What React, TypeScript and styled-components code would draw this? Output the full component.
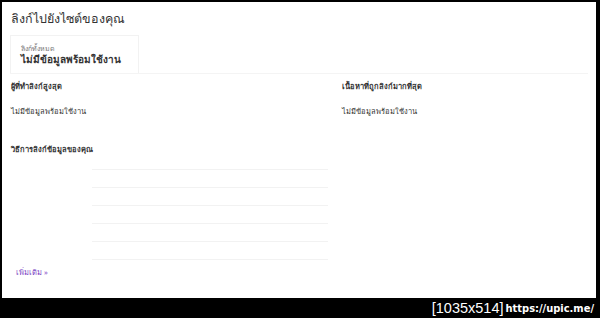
import styled, { createGlobalStyle } from 'styled-components';

const GlobalStyle = createGlobalStyle`
  html, body {
    margin: 0;
    padding: 0;
    background: #000;
    font-family: "Noto Sans", "DejaVu Sans", sans-serif;
  }
`;

const Screen = styled.div`
  width: 600px;
  height: 318px;
  background: #000;
  display: flex;
  flex-direction: column;
  padding: 2px 4px 0 2px;
  box-sizing: border-box;
`;

const Page = styled.main`
  height: 296px;
  background: #fff;
  display: flex;
  flex-direction: column;
  box-sizing: border-box;
  padding: 9px 8px 0 8px;
  color: #222;
`;

const Title = styled.h1`
  margin: 0 0 0 1px;
  font-size: 12.5px;
  font-weight: 400;
  color: #333;
  line-height: 16px;
`;

const SummaryCard = styled.div`
  margin-top: 8px;
  width: 129px;
  height: 38px;
  box-sizing: border-box;
  border: 1px solid #f2f2f2;
  border-bottom: none;
  padding: 8px 0 0 10px;
  display: flex;
  flex-direction: column;
`;

const CardLabel = styled.span`
  font-size: 7px;
  line-height: 9px;
  color: #777;
`;

const CardValue = styled.span`
  font-size: 10px;
  line-height: 13px;
  font-weight: 700;
  color: #333;
`;

const Divider = styled.hr`
  margin: 0;
  border: none;
  border-top: 1px solid #f4f4f4;
`;

const Columns = styled.div`
  display: grid;
  grid-template-columns: 331px 1fr;
  padding: 6px 0 0 1px;
`;

const Column = styled.section`
  display: flex;
  flex-direction: column;
`;

const SectionHeading = styled.h2`
  margin: 0;
  font-size: 7.5px;
  line-height: 12px;
  font-weight: 700;
  color: #333;
`;

const EmptyText = styled.p`
  margin: 13px 0 0 0;
  font-size: 7.5px;
  line-height: 12px;
  color: #333;
`;

const HowToSection = styled.section`
  padding: 26px 0 0 1px;
  display: flex;
  flex-direction: column;
`;

const Lines = styled.div`
  margin: 14px 0 0 81px;
  width: 236px;
  display: flex;
  flex-direction: column;
  gap: 17px;
`;

const Line = styled.div`
  height: 1px;
  background: #f2f2f2;
`;

const MoreLink = styled.a`
  margin: 6px 0 0 5px;
  font-size: 7.5px;
  line-height: 12px;
  color: #7b3fc4;
  text-decoration: none;
`;

const Watermark = styled.footer`
  height: 20px;
  display: flex;
  align-items: center;
  justify-content: flex-end;
  gap: 2px;
  padding-right: 2px;
  color: #fff;
  font-family: "Liberation Sans", sans-serif;
  font-size: 14.5px;
`;

const WatermarkUrl = styled.span`
  font-family: "DejaVu Sans Condensed", "DejaVu Sans", sans-serif;
  font-size: 11px;
  font-weight: 700;
`;

export default function App() {
  return (
    <>
      <GlobalStyle />
      <Screen>
        <Page>
          <Title>ลิงก์ไปยังไซต์ของคุณ</Title>
          <SummaryCard>
            <CardLabel>ลิงก์ทั้งหมด</CardLabel>
            <CardValue>ไม่มีข้อมูลพร้อมใช้งาน</CardValue>
          </SummaryCard>
          <Divider />
          <Columns>
            <Column>
              <SectionHeading>ผู้ที่ทำลิงก์สูงสุด</SectionHeading>
              <EmptyText>ไม่มีข้อมูลพร้อมใช้งาน</EmptyText>
            </Column>
            <Column>
              <SectionHeading>เนื้อหาที่ถูกลิงก์มากที่สุด</SectionHeading>
              <EmptyText>ไม่มีข้อมูลพร้อมใช้งาน</EmptyText>
            </Column>
          </Columns>
          <HowToSection>
            <SectionHeading>วิธีการลิงก์ข้อมูลของคุณ</SectionHeading>
            <Lines>
              {[0, 1, 2, 3, 4, 5].map((i) => (
                <Line key={i} />
              ))}
            </Lines>
            <MoreLink href="#">เพิ่มเติม »</MoreLink>
          </HowToSection>
        </Page>
        <Watermark>
          <span>[1035x514]</span>
          <WatermarkUrl>https://upic.me/</WatermarkUrl>
        </Watermark>
      </Screen>
    </>
  );
}
